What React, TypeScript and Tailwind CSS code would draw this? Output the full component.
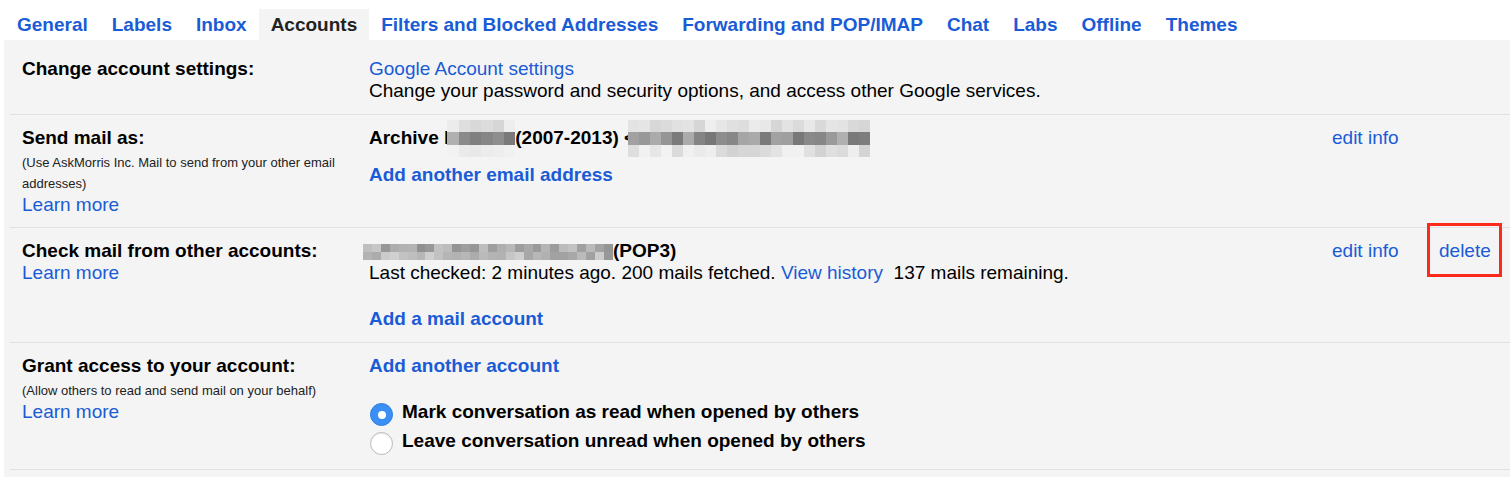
import type { ReactNode } from "react";

// Gmail settings → Accounts tab, with the redacted addresses shown as pixel blocks.

const TABS = [
  "General",
  "Labels",
  "Inbox",
  "Accounts",
  "Filters and Blocked Addresses",
  "Forwarding and POP/IMAP",
  "Chat",
  "Labs",
  "Offline",
  "Themes",
];

function seeded(n: number, seed: number, lo: number, hi: number): string[] {
  let s = seed;
  const out: string[] = [];
  for (let i = 0; i < n; i++) {
    s = (s * 9301 + 49297) % 233280;
    const v = Math.round(lo + (s / 233280) * (hi - lo));
    const h = v.toString(16).padStart(2, "0");
    out.push(`#${h}${h}${h}`);
  }
  return out;
}

function Pixels({ rows, className }: { rows: string[][]; className: string }) {
  return (
    <span className={"flex flex-col shrink-0 " + className}>
      {rows.map((row, r) => (
        <span key={r} className="flex flex-1">
          {row.map((c, i) => (
            <span key={i} className="flex-1" style={{ backgroundColor: c }} />
          ))}
        </span>
      ))}
    </span>
  );
}

const BLUR_NAME = [
  ["#ececec", "#dedede", "#d8d8d8", "#dcdcdc", "#d6d6d6", "#eeeeee"],
  ["#b0b0b0", "#8a8a8a", "#7f7f7f", "#868686", "#8e8e8e", "#7a7a7a"],
  ["#f2f2f2", "#eaeaea", "#e8e8e8", "#ececec", "#eeeeee", "#f1f1f1"],
];
const BLUR_ADDR = [
  seeded(22, 7, 0xd4, 0xf2),
  seeded(22, 13, 0x74, 0xb2),
  seeded(22, 29, 0xd2, 0xf3),
];
const BLUR_POP = [seeded(28, 41, 0x8c, 0xc8), seeded(28, 57, 0x98, 0xd0)];

function Row({
  label,
  note,
  learnMore,
  children,
  actions,
  className,
}: {
  label: string;
  note?: string;
  learnMore?: boolean;
  children: ReactNode;
  actions?: ReactNode;
  className: string;
}) {
  return (
    <div className={"flex border-b border-[#e2e2e2] pl-[12px] " + className}>
      <div className="w-[347px] shrink-0">
        <div className="font-bold text-black">{label}</div>
        {note && (
          <div className="mt-[3px] text-[13px] leading-[21px] text-[#222] pr-[20px]">{note}</div>
        )}
        {learnMore && <a className="text-[#1a5bd6]">Learn more</a>}
      </div>
      <div className="flex-1 min-w-0">{children}</div>
      <div className="w-[178px] shrink-0 flex">{actions}</div>
    </div>
  );
}

function Radio({ checked }: { checked?: boolean }) {
  if (checked) {
    return (
      <span className="mt-[2px] w-[23px] h-[23px] shrink-0 rounded-full bg-[#3b8ef3] border border-[#2f7de0] flex items-center justify-center">
        <span className="w-[8px] h-[8px] rounded-full bg-white" />
      </span>
    );
  }
  return (
    <span className="mt-[2px] w-[23px] h-[23px] shrink-0 rounded-full bg-white border border-[#b9b9b9] shadow-[inset_0_1px_1px_rgba(0,0,0,0.08)]" />
  );
}

export default function App() {
  return (
    <div className="w-[1510px] h-[477px] overflow-hidden bg-white font-['Liberation_Sans',Arial,sans-serif] text-[19px] leading-[22px] text-[#222]">
      <nav className="flex pl-[5px] pt-[9px]">
        {TABS.map((t) => (
          <a
            key={t}
            className={
              "px-[12px] pt-[5px] pb-[4px] font-bold whitespace-nowrap " +
              (t === "Accounts" ? "bg-[#f4f4f4] text-[#222]" : "text-[#1a5bd6]")
            }
          >
            {t}
          </a>
        ))}
      </nav>

      <div className="ml-[4px] h-[437px] bg-[#f4f4f4] pl-[6px]">
        <Row label="Change account settings:" className="pt-[18px] pb-[12px]">
          <a className="block text-[#1a5bd6]">Google Account settings</a>
          <div className="text-black">
            Change your password and security options, and access other Google services.
          </div>
        </Row>

        <Row
          label="Send mail as:"
          note="(Use AskMorris Inc. Mail to send from your other email addresses)"
          learnMore
          className="pt-[12px] pb-[11px]"
          actions={<a className="w-[107px] text-[#1a5bd6]">edit info</a>}
        >
          <div className="flex items-center h-[22px] font-bold text-black whitespace-nowrap">
            <span>Archive l</span>
            <Pixels rows={BLUR_NAME} className="w-[68px] h-[37px] -ml-[2px] mt-[1px]" />
            <span>(2007-2013)&nbsp;&lt;</span>
            <Pixels rows={BLUR_ADDR} className="w-[242px] h-[37px] -ml-[7px] mt-[1px]" />
          </div>
          <a className="block mt-[15px] font-bold text-[#1a5bd6]">Add another email address</a>
        </Row>

        <Row
          label="Check mail from other accounts:"
          learnMore
          className="pt-[12px] pb-[12px]"
          actions={
            <>
              <a className="w-[107px] text-[#1a5bd6]">edit info</a>
              <span className="relative">
                <a className="text-[#1a5bd6]">delete</a>
                <span className="absolute -left-[12px] -top-[17px] w-[75px] h-[54px] border-[3px] border-[#fb2a1b]" />
              </span>
            </>
          }
        >
          <div className="flex items-center h-[22px] font-bold text-black whitespace-nowrap">
            <Pixels rows={BLUR_POP} className="w-[250px] h-[16px] -ml-[6px] mt-[2px]" />
            <span>(POP3)</span>
          </div>
          <div className="text-black whitespace-nowrap">
            Last checked: 2 minutes ago. 200 mails fetched.{" "}
            <a className="text-[#1a5bd6]">View history</a>
            {"\u00a0\u00a0"}137 mails remaining.
          </div>
          <a className="block mt-[24px] font-bold text-[#1a5bd6]">Add a mail account</a>
        </Row>

        <Row
          label="Grant access to your account:"
          note="(Allow others to read and send mail on your behalf)"
          learnMore
          className="pt-[12px] pb-[14px]"
        >
          <a className="block font-bold text-[#1a5bd6]">Add another account</a>
          <div className="mt-[24px] flex flex-col gap-[4px] font-bold text-black">
            <label className="flex items-start gap-[9px] ml-[1px]">
              <Radio checked />
              <span>Mark conversation as read when opened by others</span>
            </label>
            <label className="flex items-start gap-[9px] ml-[1px]">
              <Radio />
              <span>Leave conversation unread when opened by others</span>
            </label>
          </div>
        </Row>
      </div>
    </div>
  );
}
